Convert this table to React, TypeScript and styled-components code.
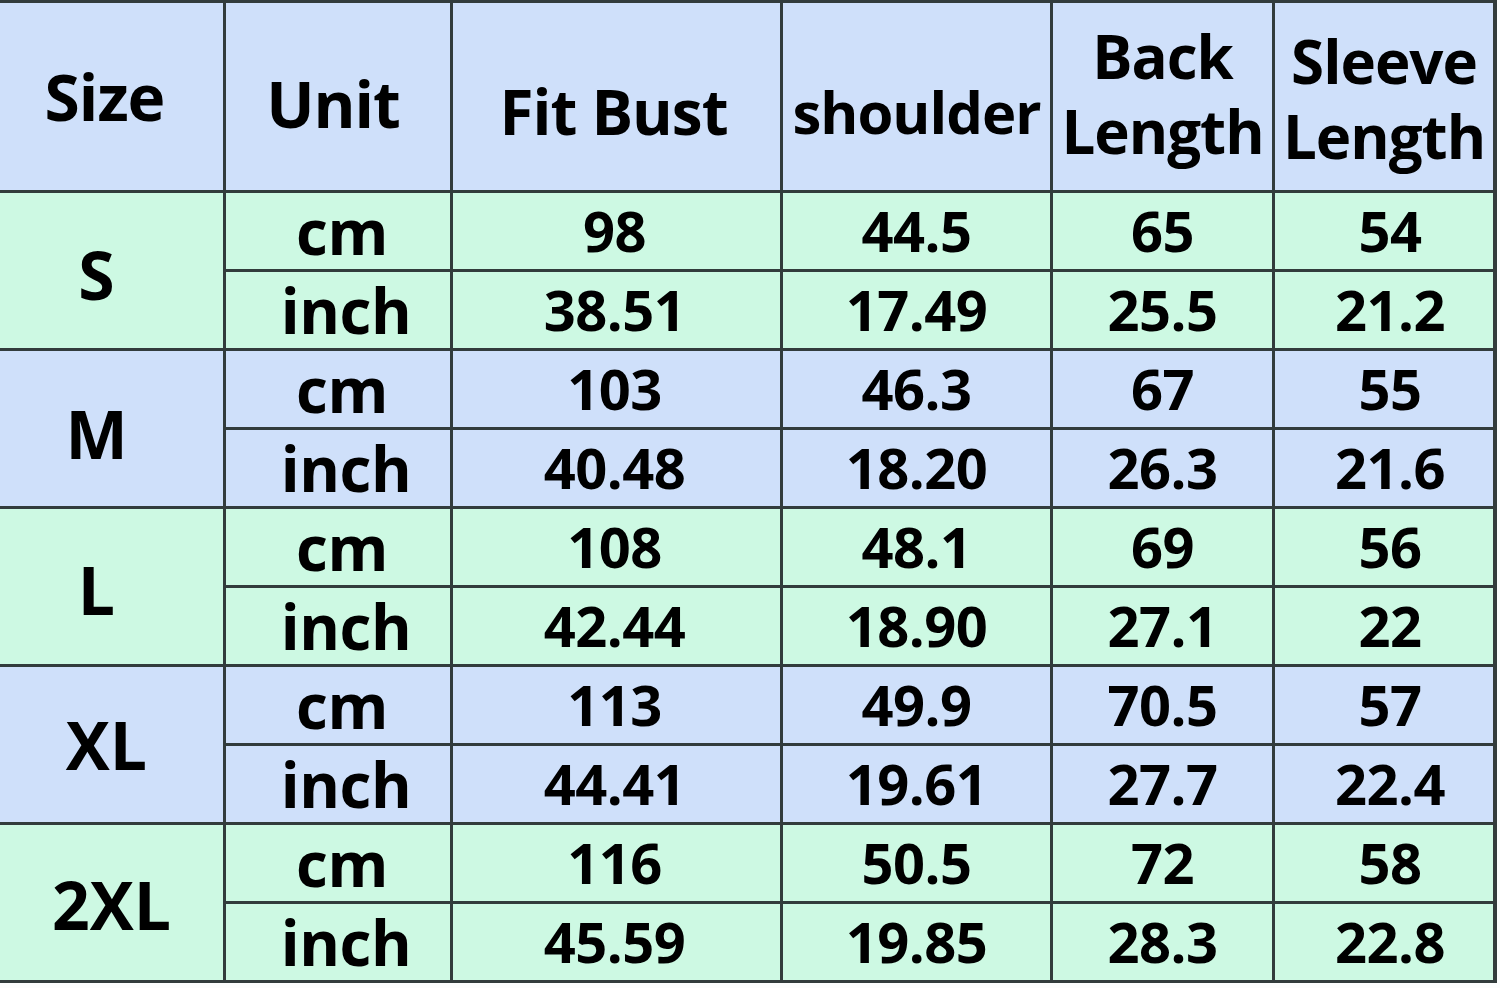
import React from 'react';
import styled, { createGlobalStyle } from 'styled-components';

const GlobalStyle = createGlobalStyle`
  html, body {
    margin: 0;
    padding: 0;
    background: #fbfdfd;
  }
  body {
    font-family: "Open Sans", "Noto Sans", sans-serif;
  }
`;

const BLUE = '#cfe0fa';
const GREEN = '#cdf9e3';

const Table = styled.div`
  display: grid;
  grid-template-columns: 223px 224px 327px 267px 219px 218px;
  grid-template-rows: 187px repeat(10, 76px);
  gap: 3px;
  padding: 3px 3px 3px 0;
  width: 1497px;
  box-sizing: border-box;
  background: #323c3c;
  color: #000;
  font-weight: 700;
`;

const Cell = styled.div<{ $bg: string; $span?: number; $dx?: number; $dy?: number }>`
  display: flex;
  align-items: center;
  justify-content: center;
  text-align: center;
  background: ${(p) => p.$bg};
  grid-row: ${(p) => (p.$span ? `span ${p.$span}` : 'auto')};
  padding-left: ${(p) => Math.max(p.$dx || 0, 0) * 2}px;
  padding-right: ${(p) => Math.max(-(p.$dx || 0), 0) * 2}px;
  padding-top: ${(p) => Math.max(p.$dy || 0, 0) * 2}px;
  padding-bottom: ${(p) => Math.max(-(p.$dy || 0), 0) * 2}px;
  box-sizing: border-box;
  min-width: 0;
`;

const HeadText = styled.span<{ $size?: number }>`
  font-size: ${(p) => p.$size || 62}px;
  line-height: 1.24;
  letter-spacing: -1px;
  white-space: pre-line;
`;

const SizeText = styled.span`
  font-size: 66px;
  line-height: 1.2;
`;

const UnitText = styled.span`
  font-size: 62px;
  line-height: 1.2;
  letter-spacing: -0.5px;
`;

const ValueText = styled.span`
  font-size: 56px;
  line-height: 1.2;
  letter-spacing: -0.5px;
`;

const headers = [
  { label: 'Size', dx: -7, dy: 0, size: 64 },
  { label: 'Unit', dx: -5, dy: 7, size: 64 },
  { label: 'Fit Bust', dx: -3, dy: 15, size: 62 },
  { label: 'shoulder', dx: 0, dy: 15, size: 58 },
  { label: 'Back\nLength', dx: 0, dy: -3, size: 60 },
  { label: 'Sleeve\nLength', dx: 0, dy: 2, size: 60 },
];

const sizes = [
  { name: 'S', dx: -15, dy: 4, cm: ['98', '44.5', '65', '54'], inch: ['38.51', '17.49', '25.5', '21.2'] },
  { name: 'M', dx: -15, dy: 5, cm: ['103', '46.3', '67', '55'], inch: ['40.48', '18.20', '26.3', '21.6'] },
  { name: 'L', dx: -15, dy: 3, cm: ['108', '48.1', '69', '56'], inch: ['42.44', '18.90', '27.1', '22'] },
  { name: 'XL', dx: -5, dy: 0, cm: ['113', '49.9', '70.5', '57'], inch: ['44.41', '19.61', '27.7', '22.4'] },
  { name: '2XL', dx: 0, dy: 2, cm: ['116', '50.5', '72', '58'], inch: ['45.59', '19.85', '28.3', '22.8'] },
];

const valueShift = [-2, 0, 0, 6];

const App: React.FC = () => {
  return (
    <>
      <GlobalStyle />
      <Table>
        {headers.map((h) => (
          <Cell key={h.label} $bg={BLUE} $dx={h.dx} $dy={h.dy}>
            <HeadText $size={h.size}>{h.label}</HeadText>
          </Cell>
        ))}
        {sizes.map((s, i) => {
          const bg = i % 2 === 0 ? GREEN : BLUE;
          return (
            <React.Fragment key={s.name}>
              <Cell $bg={bg} $span={2} $dx={s.dx} $dy={s.dy}>
                <SizeText>{s.name}</SizeText>
              </Cell>
              <Cell $bg={bg} $dx={4}>
                <UnitText>cm</UnitText>
              </Cell>
              {s.cm.map((v, j) => (
                <Cell key={`cm${j}`} $bg={bg} $dx={valueShift[j]}>
                  <ValueText>{v}</ValueText>
                </Cell>
              ))}
              <Cell $bg={bg} $dx={8}>
                <UnitText>inch</UnitText>
              </Cell>
              {s.inch.map((v, j) => (
                <Cell key={`in${j}`} $bg={bg} $dx={valueShift[j]}>
                  <ValueText>{v}</ValueText>
                </Cell>
              ))}
            </React.Fragment>
          );
        })}
      </Table>
    </>
  );
};

export default App;
